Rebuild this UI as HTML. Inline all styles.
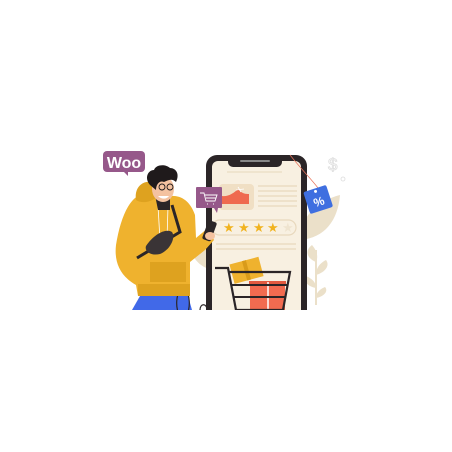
<!DOCTYPE html>
<html><head><meta charset="utf-8"><style>html,body{margin:0;padding:0;background:#fff}svg{display:block}</style></head>
<body>
<svg width="452" height="452" viewBox="0 0 452 452" xmlns="http://www.w3.org/2000/svg">
<defs><clipPath id="c"><rect x="0" y="0" width="452" height="310"/></clipPath></defs>
<g clip-path="url(#c)">
<path d="M300 240 C300 215 320 200 340 195 C338 220 325 238 300 240Z" fill="#ebe0c9"/>
<path d="M188 240 C200 235 212 250 214 270 C198 268 190 255 188 240Z" fill="#ebe0c9"/>
<path d="M316 250 L316 305" stroke="#ebe0c9" stroke-width="2"/>
<path d="M316 262 C306 258 305 250 312 245 C318 252 318 258 316 262Z" fill="#ebe0c9"/>
<path d="M316 275 C326 272 330 265 326 260 C318 264 316 270 316 275Z" fill="#ebe0c9"/>
<path d="M316 288 C306 286 303 280 306 276 C313 279 316 283 316 288Z" fill="#ebe0c9"/>
<path d="M316 298 C326 296 328 290 325 287 C318 290 316 294 316 298Z" fill="#ebe0c9"/>
<text x="328" y="170" font-family="Liberation Sans,sans-serif" font-size="17" fill="none" stroke="#ddd" stroke-width="0.8">$</text>
<circle cx="343" cy="179" r="2" fill="none" stroke="#ddd" stroke-width="0.8"/>
<rect x="206" y="155" width="101" height="175" rx="11" fill="#2b2527"/>
<rect x="212" y="161" width="89" height="170" rx="6" fill="#f8f0e1"/>
<rect x="228" y="156" width="54" height="11" rx="5" fill="#2b2527"/>
<rect x="240" y="160" width="30" height="2" rx="1" fill="#888"/>
<line x1="227" y1="172" x2="282" y2="172" stroke="#e9dcc3" stroke-width="1.2"/>
<rect x="219" y="184" width="35" height="26" rx="4" fill="#f0dfc4"/>
<path d="M222 204 L222 196 C228 197 234 193 238 189 C242 194 246 194 249 194 L249 204Z" fill="#ef6a4f"/>
<path d="M236 190 L244 189 M238 187 L241 192" stroke="#fff" stroke-width="0.8"/>
<g stroke="#e8d8bd" stroke-width="1.2"><line x1="258" y1="186" x2="297" y2="186"/><line x1="258" y1="191" x2="297" y2="191"/><line x1="258" y1="196" x2="297" y2="196"/><line x1="258" y1="201" x2="297" y2="201"/><line x1="258" y1="206" x2="297" y2="206"/>
<line x1="216" y1="244" x2="296" y2="244"/><line x1="216" y1="249" x2="296" y2="249"/></g>
<rect x="212" y="220" width="84" height="15" rx="7.5" fill="none" stroke="#e8d8bd" stroke-width="1.2"/>
<g font-family="DejaVu Sans,sans-serif" font-size="13" fill="#f1b31f"><text x="223" y="232">★</text><text x="238" y="232">★</text><text x="253" y="232">★</text><text x="267" y="232">★</text><text x="282" y="232" fill="#efe4cf">★</text></g>
<rect x="196" y="187" width="26" height="21" rx="1" fill="#96588a"/>
<path d="M214 208 L217 213 L218 208Z" fill="#96588a"/>
<path d="M200 193 L204 193 L206 201 L215 201 L217 195 L205 195 M207 204 h1 M213 204 h1 M206 198 L216 198" stroke="#fff" stroke-width="0.9" fill="none"/>
<path d="M290 155 C302 170 312 180 318 188" stroke="#e8735a" stroke-width="0.7" fill="none"/>
<g transform="rotate(-18 318 199)"><rect x="306" y="188" width="24" height="23" rx="2" fill="#3f6fe0"/><circle cx="318" cy="191" r="1.5" fill="#fff"/><text x="318" y="206" text-anchor="middle" font-family="Liberation Sans,sans-serif" font-weight="bold" font-size="12" fill="#fff">%</text></g>
<g transform="rotate(-15 248 272)"><rect x="232" y="260" width="30" height="20" fill="#efb22e"/><rect x="245" y="260" width="4" height="20" fill="#d99b1a"/></g>
<rect x="250" y="283" width="35" height="30" fill="#f26b50"/>
<rect x="249" y="281" width="37" height="5" fill="#e15a40"/>
<line x1="268" y1="282" x2="268" y2="313" stroke="#fff" stroke-width="1.5"/>
<path d="M215 268 L228 268 L236 310 L283 310 L290 272 L228 272" stroke="#2b2527" stroke-width="2.2" fill="none"/>
<line x1="231" y1="285" x2="288" y2="285" stroke="#2b2527" stroke-width="2"/>
<line x1="233" y1="297" x2="286" y2="297" stroke="#2b2527" stroke-width="2"/>
<path d="M132 310 L140 296 L188 296 L192 310Z" fill="#4169e8"/>
<path d="M180 290 C176 296 176 306 178 312 M186 290 C190 296 190 306 188 312" stroke="#2b2527" stroke-width="1.2" fill="none"/>
<path d="M200 310 C200 303 207 303 207 310" stroke="#2b2527" stroke-width="1.2" fill="none"/>
<path d="M140 195 C128 200 120 220 116 245 C114 262 120 276 136 285 L138 296 L190 296 L190 262 L205 250 L214 240 L208 228 L196 238 L195 215 C190 200 180 195 170 196Z" fill="#efb22e"/>
<path d="M138 284 L190 284 L190 296 L138 296Z" fill="#dea21f"/>
<path d="M150 262 L186 262 L186 282 L150 282Z" fill="#dea21f"/>
<path d="M136 200 C134 188 142 180 152 182 L156 198 C150 202 142 204 136 200Z" fill="#dea21f"/>
<path d="M158 206 L160 240 M168 206 L167 240" stroke="#fff" stroke-width="0.8"/>
<path d="M137 258 L180 232 L172 205" stroke="#2b2527" stroke-width="3" fill="none"/>
<path d="M146 246 C154 234 166 228 172 232 C176 238 170 250 160 254 C152 256 144 252 146 246Z" fill="#3a3436"/>
<path d="M155 195 L158 210 L170 210 L170 196Z" fill="#2b2527"/>
<ellipse cx="163" cy="189" rx="11" ry="13" fill="#f4c2a0"/>
<path d="M150 185 C144 178 148 170 154 170 C156 164 166 164 170 168 C176 168 180 174 176 182 C172 178 168 180 164 182 C160 180 156 184 156 190Z" fill="#1f1a1b"/>
<path d="M158 196 C162 200 167 199 169 196Z" fill="#fff"/>
<circle cx="162" cy="187" r="3" fill="none" stroke="#1f1a1b" stroke-width="0.9"/><circle cx="170" cy="187" r="3" fill="none" stroke="#1f1a1b" stroke-width="0.9"/>
<rect x="205" y="221" width="9" height="20" rx="2" transform="rotate(20 210 231)" fill="#2b2527"/>
<ellipse cx="210" cy="236" rx="5" ry="4" fill="#f4c2a0"/>
</g>
<rect x="103" y="151" width="42" height="21" rx="4" fill="#96588a"/>
<path d="M123 171 L128 176 L128 171Z" fill="#96588a"/>
<text x="124" y="168" text-anchor="middle" font-family="Liberation Sans,sans-serif" font-weight="bold" font-size="16" fill="#fff">Woo</text>
</svg>
</body></html>
